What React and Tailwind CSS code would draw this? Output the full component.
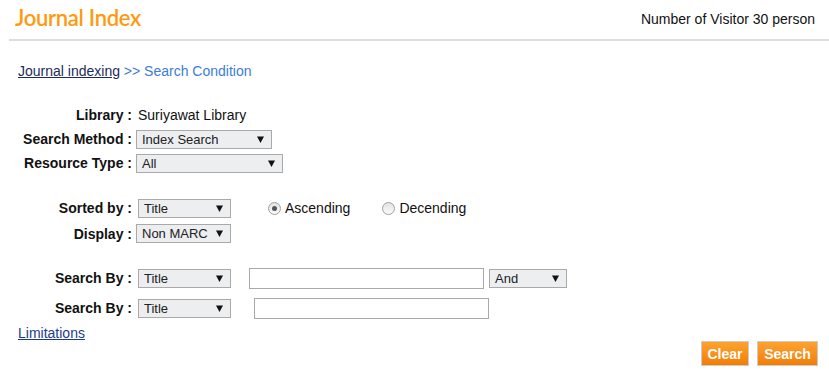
import React from 'react';

const Arrow = () => (
  <svg width="7" height="7" viewBox="0 0 7 7" className="shrink-0">
    <path d="M0 0.5 H7 L3.5 7 Z" fill="#111" />
  </svg>
);

const Select = ({ value, width, className = '' }) => (
  <div
    className={`flex items-center justify-between h-[19px] border border-[#a9a9a9] bg-[#eceef0] pl-[5px] pr-[7px] text-[13px] text-[#222] ${className}`}
    style={{ width }}
  >
    <span className="leading-none">{value}</span>
    <Arrow />
  </div>
);

const Radio = ({ checked, label }) => (
  <div className="flex items-center gap-[4px]">
    <span className="w-[13px] h-[13px] rounded-full border border-[#a0a0a0] bg-gradient-to-b from-[#e2e2e2] to-[#fafafa] flex items-center justify-center">
      {checked && <span className="w-[5px] h-[5px] rounded-full bg-[#555]" />}
    </span>
    <span className="text-[14px] text-[#111]">{label}</span>
  </div>
);

const Row = ({ label, children, className = '' }) => (
  <div className={`flex items-center ${className}`}>
    <div className="w-[114px] text-right font-bold text-[14px] text-[#111] whitespace-nowrap">{label} :</div>
    {children}
  </div>
);

const App = () => {
  return (
    <div className="w-[829px] h-[371px] bg-white overflow-hidden leading-[16px]" style={{ fontFamily: '"Liberation Sans", Arial, sans-serif' }}>
      {/* Header */}
      <div className="ml-[9px] h-[41px] border-b-2 border-[#dedede] flex justify-between items-start">
        <h1 className="ml-[6px] mt-[6px] text-[22px] leading-[24px] font-semibold text-[#ff9a10] tracking-[-0.3px]" style={{ fontFamily: 'Lato, "Open Sans", sans-serif' }}>
          Journal Index
        </h1>
        <div className="mr-[14px] mt-[11px] text-[14px] text-[#111]">Number of Visitor 30 person</div>
      </div>

      <div className="pl-[18px]">
        {/* Breadcrumb */}
        <div className="mt-[22px] text-[14px]">
          <a href="#" className="text-[#1c2c5c] underline">Journal indexing</a>
          <span className="text-[#3b7dd8]"> &gt;&gt; Search Condition</span>
        </div>

        {/* Search form */}
        <div className="mt-[24px] flex flex-col">
          <Row label="Library" className="h-[24px]">
            <span className="ml-[6px] text-[14px] text-[#111]">Suriyawat Library</span>
          </Row>
          <Row label="Search Method" className="h-[24px]">
            <Select value="Index Search" width={136} className="ml-[4px]" />
          </Row>
          <Row label="Resource Type" className="h-[24px]">
            <Select value="All" width={147} className="ml-[4px]" />
          </Row>

          <Row label="Sorted by" className="h-[26px] mt-[20px]">
            <Select value="Title" width={93} className="ml-[6px]" />
            <div className="ml-[37px] flex items-center gap-[32px]">
              <Radio checked label="Ascending" />
              <Radio label="Decending" />
            </div>
          </Row>
          <Row label="Display" className="h-[25px]">
            <Select value="Non MARC" width={95} className="ml-[4px]" />
          </Row>

          <Row label="Search By" className="h-[30px] mt-[17px]">
            <Select value="Title" width={93} className="ml-[6px]" />
            <input type="text" className="ml-[18px] w-[235px] h-[21px] border border-[#a9a9a9] bg-white outline-none" />
            <Select value="And" width={78} className="ml-[5px]" />
          </Row>
          <Row label="Search By" className="h-[30px]">
            <Select value="Title" width={93} className="ml-[6px]" />
            <input type="text" className="ml-[23px] w-[235px] h-[21px] border border-[#a9a9a9] bg-white outline-none" />
          </Row>
        </div>

        <div className="mt-[2px] text-[14px]">
          <a href="#" className="text-[#1c3a8a] underline">Limitations</a>
        </div>
      </div>

      {/* Buttons */}
      <div className="flex justify-end gap-[8px] pr-[11px]">
        <button className="h-[25px] w-[48px] border border-[#c9cdd0] bg-gradient-to-b from-[#ffa22e] to-[#f27d00] text-white font-bold text-[14px]">
          Clear
        </button>
        <button className="h-[25px] w-[61px] border border-[#c9cdd0] bg-gradient-to-b from-[#ffa22e] to-[#f27d00] text-white font-bold text-[14px]">
          Search
        </button>
      </div>
    </div>
  );
};

export default App;
